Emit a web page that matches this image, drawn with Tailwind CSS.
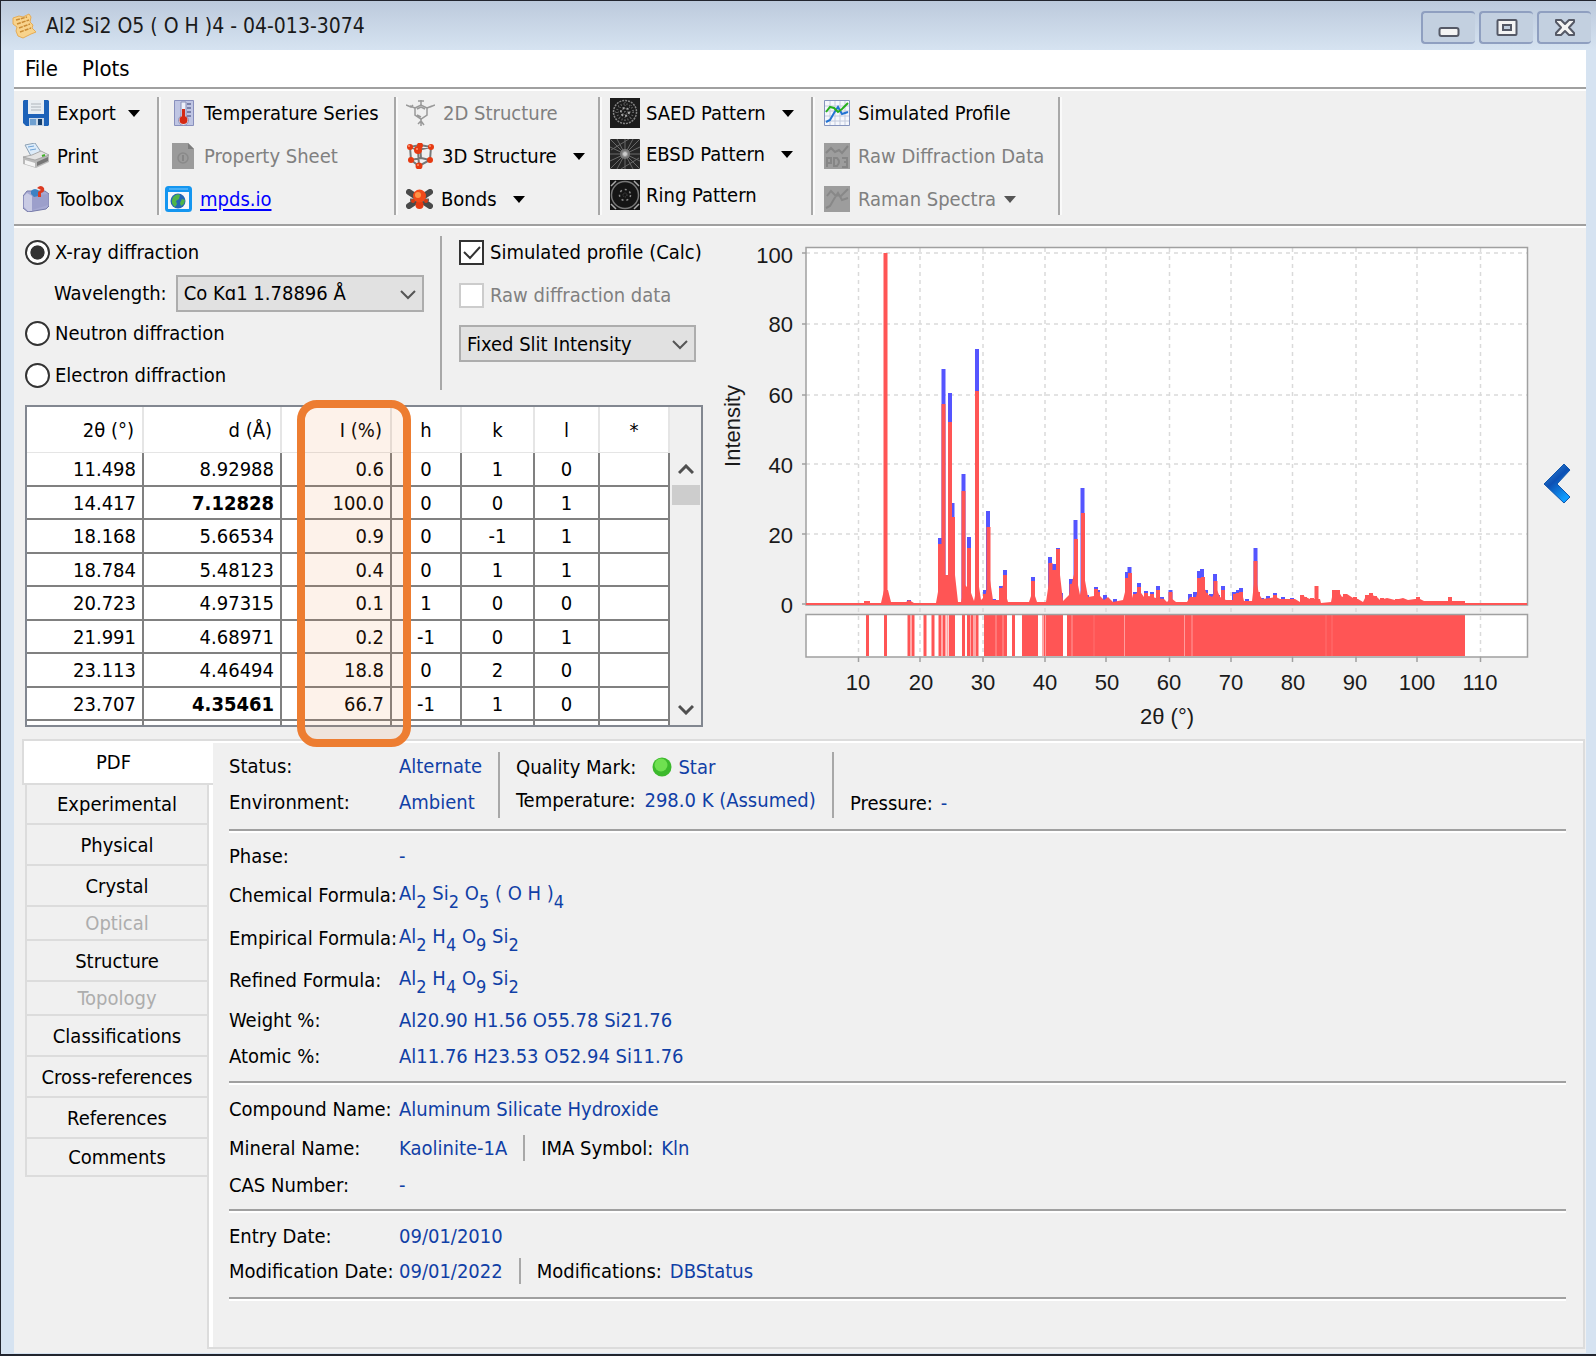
<!DOCTYPE html>
<html lang="en">

<head>
    <meta charset="UTF-8" />
    <meta name="viewport" content="width=device-width, initial-scale=1.0" />
    <title>Al2 Si2 O5 ( O H )4 - 04-013-3074</title>
    <script src="https://cdn.jsdelivr.net/npm/@tailwindcss/browser@4"></script>
</head>

<body
    class="min-h-screen flex flex-col bg-[#d6e3f1] border border-b-2 border-r-0 border-[#22252e] text-black text-[20px] leading-6 font-['DejaVu_Sans_Condensed','DejaVu_Sans',sans-serif]">

    <!-- Title bar -->
    <header class="h-[49px] shrink-0 flex items-center bg-linear-to-b from-[#bccadc] to-[#d6e3f1] pl-[10px] pr-[5px]">
        <svg class="w-[26px] h-[26px]" viewBox="0 0 26 26">
            <path d="M2 5 8 3 12 4 18 1 20 4 19 9 22 12 21 15 25 19 20 21 12 25 7 23 5 18 6 14 2 11Z" fill="#f8d38c" stroke="#e6ac55" />
            <path d="M5 7l11-3M6 11l12-4M8 15l11-4M9 19l11-4" stroke="#c98b35" stroke-width="1.5" stroke-dasharray="4 1" />
        </svg>
        <h1 class="flex-1 pl-[9px] text-[21px] text-[#1a1a1a]">Al2 Si2 O5 ( O H )4 - 04-013-3074</h1>
        <div class="flex gap-1 pt-1">
            <button aria-label="Minimize" class="w-[54px] h-[33px] grid place-items-center rounded-sm border-2 border-r-0 border-[#8f9fc0] bg-[#c3d0e0]">
                <svg class="w-6 h-6" viewBox="0 0 24 24"><rect x="2.500" y="12" width="19" height="8" rx="2" fill="#f4f4f4" stroke="#555966" stroke-width="2" /></svg>
            </button>
            <button aria-label="Maximize" class="w-[54px] h-[33px] grid place-items-center rounded-sm border-2 border-r-0 border-[#8f9fc0] bg-[#c3d0e0]">
                <svg class="w-6 h-6" viewBox="0 0 24 24"><rect x="2.500" y="4" width="19" height="15" rx="1" fill="#f4f4f4" stroke="#555966" stroke-width="2" /><rect x="8" y="9" width="8" height="5" fill="#c3d0e0" stroke="#555966" stroke-width="2" /></svg>
            </button>
            <button aria-label="Close" class="w-[54px] h-[33px] grid place-items-center rounded-sm border-2 border-r-0 border-[#8f9fc0] bg-[#c3d0e0]">
                <svg class="w-6 h-6" viewBox="0 0 24 24"><path d="M3 4h5l4 4 4-4h5v2l-5 5.500 5 5.500v2h-5l-4-4-4 4H3v-2l5-5.500L3 6Z" fill="#f4f4f4" stroke="#555966" stroke-width="2" stroke-linejoin="round" /></svg>
            </button>
        </div>
    </header>

    <div class="flex-1 flex flex-col ml-[13px] mr-[10px] mb-px bg-[#f0f0f0]">
        <!-- Menu -->
        <nav class="h-[39px] flex items-center gap-6 pl-[11px] text-[22px] bg-white border-b-2 border-[#a0a0a0]">
            <button>File</button>
            <button>Plots</button>
        </nav>

        <!-- Toolbar -->
        <div class="h-[137px] flex pt-[3px] border-t-2 border-t-white border-b-2 border-b-[#a0a0a0] shadow-[0_2px_0_#fff]">
            <div class="w-[145px] h-[118px] mt-[3px] pl-[9px] flex flex-col justify-between border-r-2 border-[#a8a8a8] shadow-[2px_0_0_#fafafa]">
                <button class="h-8 flex items-center gap-2">
                    <svg class="w-[26px] h-[26px]" viewBox="0 0 26 26">
                        <path d="M1 0h24l1 1v24l-1 1H3l-3-3V1Z" fill="#1d62b8" />
                        <path d="M5 0h16v14H5Z" fill="#e9eef2" />
                        <path d="M8 4h10M8 7h10M8 10h10" stroke="#aeb5bb" />
                        <path d="M6 18h15v8H6Z" fill="#c7d6e6" />
                        <path d="M15 19h4v6h-4Z" fill="#17406e" />
                        <path d="M7 19h6v6H7Z" fill="#6fa0d0" />
                    </svg>
                    Export
                    <svg class="w-3 h-[7px] ml-1" viewBox="0 0 12 7"><path d="M0 0h12L6 7Z" /></svg>
                </button>
                <button class="h-8 flex items-center gap-2">
                    <svg class="w-[26px] h-[26px]" viewBox="0 0 26 26">
                        <path d="M2 2 12 0 18 9 8 13Z" fill="#dcebf9" stroke="#8ea2b5" />
                        <path d="M5 4l6-1M7 7l6-1" stroke="#6fa3d6" />
                        <path d="M0 14 9 12 18 8 26 12V19L13 25 0 21Z" fill="#b9b9b9" />
                        <path d="M0 14 9 12 18 8 26 12 12 17Z" fill="#e3e3e3" stroke="#969696" stroke-width=".7" />
                        <path d="M2 17l10 3v4L2 21Z" fill="#f5f5f5" />
                        <path d="M14 19l11-5v4l-11 5Z" fill="#777" />
                        <path d="M19 13l3-1" stroke="#43b02a" stroke-width="2" />
                    </svg>
                    Print
                </button>
                <button class="h-8 flex items-center gap-2">
                    <svg class="w-[26px] h-[26px]" viewBox="0 0 26 26">
                        <path d="M0 10 4 5H22L26 8V20L23 23 5 26 0 22Z" fill="#a6a9d2" stroke="#7579a8" />
                        <path d="M1 10 4 7 9 10V25L5 25 1 21Z" fill="#c9cbe4" />
                        <path d="M9 10 25 8V19L9 24Z" fill="#9c9fcb" />
                        <path d="M8 5q4-4 8 0v5l-5 1-3-3Z" fill="#3c82c4" />
                        <path d="M14 2q4-4 7 0 1 4-3 5v4h-3V6l3-2Z" fill="#dc3a20" />
                    </svg>
                    Toolbox
                </button>
            </div>

            <div class="w-[237px] h-[118px] mt-[3px] pl-[6px] flex flex-col justify-between border-r-2 border-[#a8a8a8] shadow-[2px_0_0_#fafafa]">
                <button class="h-8 flex items-center gap-[10px] pl-[9px]">
                    <svg class="w-[20px] h-[26px]" viewBox="0 0 20 26">
                        <path d="M.5.500h19v25H.500Z" fill="#bfc5e3" stroke="#8990bd" />
                        <path d="M13 4h4M13 8h4M13 12h4M13 16h4" stroke="#646b98" stroke-width="1.500" />
                        <path d="M7 2h5v14a5 5 0 1 1-5 0Z" fill="#edf0fa" stroke="#8b91b8" />
                        <path d="M9.500 9v11" stroke="#d42a14" stroke-width="3" /><circle cx="9.500" cy="20" r="4" fill="#d42a14" />
                    </svg>
                    Temperature Series
                </button>
                <button disabled class="h-8 flex items-center gap-[10px] pl-[7px] text-[#808080]">
                    <svg class="w-[22px] h-[26px]" viewBox="0 0 22 26">
                        <path d="M0 0h16l6 6v20H0Z" fill="#9b9b9b" /><path d="M16 0v6h6Z" fill="#7d7d7d" />
                        <circle cx="11" cy="15" r="5" fill="none" stroke="#8a8a8a" stroke-width="1.500" /><path d="M11 12v6" stroke="#868686" stroke-width="2" />
                    </svg>
                    Property Sheet
                </button>
                <a href="#" class="h-8 flex items-center gap-2 text-[#0000ff] underline underline-offset-3">
                    <svg class="w-[27px] h-[26px]" viewBox="0 0 27 26">
                        <rect x="1.500" y="1.500" width="24" height="23" rx="2" fill="#f6f8fa" stroke="#1496f0" stroke-width="3" />
                        <path d="M2 3h23v3H2Z" fill="#1496f0" /><path d="M4 3h19" stroke="#7cc8ff" />
                        <circle cx="13" cy="15" r="7.500" fill="#2366b5" />
                        <path d="M8 11q4-4 7-2l-1 4-3 2 1 3-2 3q-5-4-2-10M17 13l3 1-1 4-3 2-1-3Z" fill="#4fb548" />
                    </svg>
                    mpds.io
                </a>
            </div>

            <div class="w-[204px] h-[118px] mt-[3px] pl-[10px] flex flex-col justify-between border-r-2 border-[#a8a8a8] shadow-[2px_0_0_#fafafa]">
                <button disabled class="h-8 flex items-center gap-2 text-[#808080]">
                    <svg class="w-[29px] h-[28px]" viewBox="0 0 29 28" fill="none" stroke="#999" stroke-width="1.500">
                        <path d="M9 9l6-3 6 3v7l-6 4-6-4ZM11 10l4-2 4 2M11 16l4 2" />
                        <path d="M9 9 4 7M21 9l5-2M15 6V1M15 20v7M0 6l5 2 2-2M24 8l5-2M12 2h6M12 25l3-3 3 4" />
                    </svg>
                    2D Structure
                </button>
                <button class="h-8 flex items-center gap-2">
                    <svg class="w-[28px] h-[26px]" viewBox="0 0 28 26">
                        <path d="M4 4 14 2 25 4M4 4 5 17 13 23 24 17 25 4 12 7 4 4M12 7 13 23M14 2 15 15 5 17M15 15l9 2" fill="none" stroke="#777" stroke-width="2" />
                        <g fill="#e63a12"><circle cx="4" cy="4" r="3" /><circle cx="14" cy="2.500" r="3" /><circle cx="25" cy="4" r="3" /><circle cx="12" cy="7" r="4" /><circle cx="5" cy="17" r="3" /><circle cx="24" cy="17" r="3" /><circle cx="13" cy="23" r="3.500" /></g>
                        <g fill="#ff9670"><circle cx="11" cy="6" r="1" /><circle cx="3" cy="3" r="1" /><circle cx="24" cy="3" r="1" /><circle cx="12" cy="22" r="1" /></g>
                    </svg>
                    3D Structure
                    <svg class="w-3 h-[7px] ml-2" viewBox="0 0 12 7"><path d="M0 0h12L6 7Z" /></svg>
                </button>
                <button class="h-8 flex items-center gap-2">
                    <svg class="w-[27px] h-[20px]" viewBox="0 0 27 20">
                        <path d="M3 3 24 17M24 3 3 17" stroke="#4a4a4a" stroke-width="6" stroke-linecap="round" />
                        <path d="M4 11h19" stroke="#666" stroke-width="3" />
                        <circle cx="13.500" cy="16" r="4" fill="#e63a12" /><circle cx="7" cy="12" r="2" fill="#d93a12" /><circle cx="20" cy="12" r="2" fill="#d93a12" />
                        <circle cx="13.500" cy="7" r="6.500" fill="#f04a1a" /><circle cx="12" cy="6" r="3" fill="#ff9448" />
                    </svg>
                    Bonds
                    <svg class="w-3 h-[7px] ml-2" viewBox="0 0 12 7"><path d="M0 0h12L6 7Z" /></svg>
                </button>
            </div>

            <div class="w-[213px] h-[118px] mt-[3px] pl-[10px] flex flex-col border-r-2 border-[#a8a8a8] shadow-[2px_0_0_#fafafa]">
                <button class="h-[41px] pb-[9px] flex items-center gap-[6px]">
                    <svg class="w-[30px] h-[30px]" viewBox="0 0 30 30" fill="none">
                        <path d="M0 0h30v30H0Z" fill="#1c1c1c" />
                        <circle cx="15" cy="14" r="11.500" stroke="#858585" stroke-width="1.500" stroke-dasharray="2 1" /><circle cx="15" cy="14" r="8" stroke="#666" stroke-width="2" stroke-dasharray="1 2" />
                        <circle cx="15" cy="14" r="4" stroke="#aaa" stroke-width="2" stroke-dasharray="2 2" /><path d="M5 14h20M15 4v20M8 7l14 14M22 7 8 21" stroke="#666" stroke-dasharray="1 2" />
                    </svg>
                    SAED Pattern
                    <svg class="w-3 h-[7px] ml-[10px]" viewBox="0 0 12 7"><path d="M0 0h12L6 7Z" /></svg>
                </button>
                <button class="h-[41px] pb-[9px] flex items-center gap-[6px]">
                    <svg class="w-[30px] h-[30px]" viewBox="0 0 30 30">
                        <path d="M0 0h30v30H0Z" fill="#262626" />
                        <path d="M0 0l30 30M30 0 0 30M15 0v30M0 15h30M7 0l16 30M23 0 7 30M0 8l30 14M0 22 30 8M1 11 19 0M11 30l18-11" stroke="#686868" />
                        <circle cx="15" cy="15" r="5" fill="#777" /><circle cx="15" cy="15" r="2.500" fill="#ccc" stroke="#999" />
                    </svg>
                    EBSD Pattern
                    <svg class="w-3 h-[7px] ml-[10px]" viewBox="0 0 12 7"><path d="M0 0h12L6 7Z" /></svg>
                </button>
                <button class="h-8 flex items-center gap-[6px]">
                    <svg class="w-[30px] h-[30px]" viewBox="0 0 30 30" fill="none">
                        <path d="M0 0h30v30H0Z" fill="#151515" />
                        <circle cx="15" cy="15" r="13.500" stroke="#777" stroke-width="1.500" /><circle cx="15" cy="15" r="5.500" stroke="#888" stroke-width="1.500" stroke-dasharray="2 3" /><circle cx="15" cy="15" r="2" stroke="#555" stroke-dasharray="1 1" />
                        <path d="M1 6 6 1M24 1l5 5M1 24l5 5M29 24l-5 5" stroke="#aaa" stroke-width="1.500" />
                    </svg>
                    Ring Pattern
                </button>
            </div>

            <div class="w-[247px] h-[118px] mt-[3px] pl-[11px] flex flex-col justify-between border-r-2 border-[#a8a8a8] shadow-[2px_0_0_#fafafa]">
                <button class="h-8 flex items-center gap-2">
                    <svg class="w-[26px] h-[26px]" viewBox="0 0 26 26" fill="none">
                        <path d="M.5.500h25v25H.500Z" fill="#f5f7fc" stroke="#8594bd" />
                        <path d="M6 1v24M11 1v24M16 1v24M21 1v24M1 6h24M1 11h24M1 16h24M1 21h24" stroke="#c4cbdd" />
                        <path d="M2 22 6 20 10 13 14 7 18 14 24 12" stroke="#2273d2" stroke-width="2" /><path d="M2 12 6 7 10 8 14 12 18 9 24 3" stroke="#25b01c" stroke-width="2" />
                    </svg>
                    Simulated Profile
                </button>
                <button disabled class="h-8 flex items-center gap-2 text-[#808080]">
                    <svg class="w-[26px] h-[26px]" viewBox="0 0 26 26" fill="none">
                        <path d="M0 0h26v26H0Z" fill="#9d9d9d" />
                        <path d="M2 10 7 5 11 9 15 7 18 10 24 3M3 24V15h4v5H3M10 24V15h3q4 4 0 8h-3M18 15h5v4h-3 3v5h-5" stroke="#868686" stroke-width="2" />
                    </svg>
                    Raw Diffraction Data
                </button>
                <button disabled class="h-8 flex items-center gap-2 text-[#808080]">
                    <svg class="w-[26px] h-[26px]" viewBox="0 0 26 26" fill="none">
                        <path d="M0 0h26v26H0Z" fill="#9d9d9d" />
                        <path d="M2 22 6 20 10 13 14 7 18 14 24 12M3 10 7 5 11 9 17 10 24 3" stroke="#888" stroke-width="2" />
                    </svg>
                    Raman Spectra
                    <svg class="w-3 h-[7px]" viewBox="0 0 12 7"><path d="M0 0h12L6 7Z" fill="#555" /></svg>
                </button>
            </div>
        </div>

        <!-- Controls, reflection list and plot -->
        <div class="flex">
            <div class="w-[689px] shrink-0 pl-[11px] pt-[10px]">
                <div class="flex h-[169px]">
                    <div class="w-[417px] h-[154px] border-r-2 border-[#a8a8a8]">
                        <label class="h-8 flex items-center gap-[5px]">
                            <input type="radio" name="source" checked class="appearance-none w-[25px] h-[25px] rounded-full bg-white border-2 border-[#333] checked:bg-radial checked:from-[#333] checked:from-45% checked:to-white checked:to-50%">
                            X-ray diffraction
                        </label>
                        <div class="h-[50px] flex items-center gap-[9px] pl-[29px]">
                            <label for="wavelength">Wavelength:</label>
                            <div class="relative ml-auto mr-[23px]">
                                <select id="wavelength" class="appearance-none block w-[248px] h-[37px] pl-[6px] bg-[#e1e1e1] border-2 border-[#adadad]">
                                    <option>Co Kɑ1 1.78896 Å</option>
                                </select>
                                <svg class="absolute right-2 top-[15px] w-4 h-[10px] pointer-events-none" viewBox="0 0 16 10"><path d="M1 1l7 7 7-7" fill="none" stroke="#555" stroke-width="2" /></svg>
                            </div>
                        </div>
                        <label class="h-[30px] flex items-center gap-[5px]">
                            <input type="radio" name="source" class="appearance-none w-[25px] h-[25px] rounded-full bg-white border-2 border-[#333] checked:bg-radial checked:from-[#333] checked:from-45% checked:to-white checked:to-50%">
                            Neutron diffraction
                        </label>
                        <label class="h-[54px] flex items-center gap-[5px]">
                            <input type="radio" name="source" class="appearance-none w-[25px] h-[25px] rounded-full bg-white border-2 border-[#333] checked:bg-radial checked:from-[#333] checked:from-45% checked:to-white checked:to-50%">
                            Electron diffraction
                        </label>
                    </div>
                    <div class="pl-[17px]">
                        <div class="h-8 flex items-center gap-[6px]">
                            <div class="relative">
                                <input id="simulated" type="checkbox" checked class="appearance-none block w-[25px] h-[25px] bg-white border-2 border-[#333]">
                                <svg class="absolute inset-0 w-[25px] h-[25px] pointer-events-none" viewBox="0 0 25 25"><path d="M5 12l6 6L21 7" fill="none" stroke="#333" stroke-width="2" /></svg>
                            </div>
                            <label for="simulated">Simulated profile (Calc)</label>
                        </div>
                        <label class="h-[54px] mb-[3px] flex items-center gap-[6px] text-[#808080]">
                            <input type="checkbox" disabled class="appearance-none w-[25px] h-[25px] bg-white border-2 border-[#ccc]">
                            Raw diffraction data
                        </label>
                        <div class="relative w-[237px]">
                            <select aria-label="Intensity type" class="appearance-none block w-full h-[37px] pl-[6px] bg-[#e1e1e1] border-2 border-[#adadad]">
                                <option>Fixed Slit Intensity</option>
                            </select>
                            <svg class="absolute right-2 top-[15px] w-4 h-[10px] pointer-events-none" viewBox="0 0 16 10"><path d="M1 1l7 7 7-7" fill="none" stroke="#555" stroke-width="2" /></svg>
                        </div>
                    </div>
                </div>

                <div class="relative w-[678px] h-[322px] flex border-2 border-[#828790]">
                    <div class="h-[318px] overflow-hidden bg-white">
                        <table class="w-[643px] table-fixed border-separate border-spacing-0 text-center">
                            <thead>
                                <tr class="h-[46px] *:font-normal *:border-r-2 *:border-b *:border-[#e5e5e5]">
                                    <th class="w-[117px] text-right pr-2">2θ (°)</th>
                                    <th class="w-[138px] text-right pr-2">d (Å)</th>
                                    <th class="w-[110px] text-right pr-2">I (%)</th>
                                    <th class="w-[70px]">h</th>
                                    <th class="w-[73px]">k</th>
                                    <th class="w-[65px]">l</th>
                                    <th class="w-[70px]">*</th>
                                </tr>
                            </thead>
                            <tbody class="[&_td]:border-r-2 [&_td]:border-b-2 [&_td]:border-[#808080] [&_tr]:odd:h-[34px] [&_tr]:even:h-[33px]">
                                <tr><td class="text-right pr-[6px]">11.498</td><td class="text-right pr-[6px]">8.92988</td><td class="text-right pr-[6px]">0.6</td><td>0</td><td>1</td><td>0</td><td></td></tr>
                                <tr><td class="text-right pr-[6px]">14.417</td><td class="text-right pr-[6px] font-bold">7.12828</td><td class="text-right pr-[6px]">100.0</td><td>0</td><td>0</td><td>1</td><td></td></tr>
                                <tr><td class="text-right pr-[6px]">18.168</td><td class="text-right pr-[6px]">5.66534</td><td class="text-right pr-[6px]">0.9</td><td>0</td><td>-1</td><td>1</td><td></td></tr>
                                <tr><td class="text-right pr-[6px]">18.784</td><td class="text-right pr-[6px]">5.48123</td><td class="text-right pr-[6px]">0.4</td><td>0</td><td>1</td><td>1</td><td></td></tr>
                                <tr><td class="text-right pr-[6px]">20.723</td><td class="text-right pr-[6px]">4.97315</td><td class="text-right pr-[6px]">0.1</td><td>1</td><td>0</td><td>0</td><td></td></tr>
                                <tr><td class="text-right pr-[6px]">21.991</td><td class="text-right pr-[6px]">4.68971</td><td class="text-right pr-[6px]">0.2</td><td>-1</td><td>0</td><td>1</td><td></td></tr>
                                <tr><td class="text-right pr-[6px]">23.113</td><td class="text-right pr-[6px]">4.46494</td><td class="text-right pr-[6px]">18.8</td><td>0</td><td>2</td><td>0</td><td></td></tr>
                                <tr><td class="text-right pr-[6px]">23.707</td><td class="text-right pr-[6px] font-bold">4.35461</td><td class="text-right pr-[6px]">66.7</td><td>-1</td><td>1</td><td>0</td><td></td></tr>
                                <tr><td></td><td></td><td></td><td></td><td></td><td></td><td></td></tr>
                            </tbody>
                        </table>
                    </div>
                    <div class="flex-1 pt-[46px] flex flex-col items-center bg-[#f0f0f0]">
                        <button aria-label="Scroll up" class="h-8 grid place-items-center"><svg class="w-4 h-[11px]" viewBox="0 0 16 11"><path d="M1 9l7-7 7 7" fill="none" stroke="#505050" stroke-width="3" /></svg></button>
                        <div class="w-7 h-[20px] bg-[#cdcdcd]"></div>
                        <button aria-label="Scroll down" class="mt-auto h-8 grid place-items-center"><svg class="w-4 h-[11px]" viewBox="0 0 16 11"><path d="M1 2l7 7 7-7" fill="none" stroke="#505050" stroke-width="3" /></svg></button>
                    </div>
                    <!-- Intensity column highlight -->
                    <div class="absolute left-[270px] -top-[7px] w-[114px] h-[347px] rounded-[20px] border-8 border-[#ed7d31] bg-[#ed7d31]/10 pointer-events-none"></div>
                </div>
            </div>

            <svg class="flex-1 min-w-0 h-auto font-['Liberation_Sans',Arial,sans-serif]" viewBox="703 226 827 505" font-size="22">
                <path d="M806 247.500h721.500V605H806ZM806 614.500h721.500V657H806Z" fill="#fff" />
                <path d="M806 253h721M806 324h721M806 395h721M806 464h721M806 534h721" stroke="#dadada" stroke-width="1.500" stroke-dasharray="4 4" />
                <path d="M858.500 248v409M920 248v409M983 248v409M1045 248v409M1106 248v409M1169.500 248v409M1231 248v409M1292.500 248v409M1356 248v409M1417 248v409M1480.500 248v409" stroke="#dadada" stroke-width="1.500" stroke-dasharray="4 4" />

                <!-- variable-slit peaks (blue) behind the fixed-slit ones (red) -->
                <path stroke="#5555ff" stroke-width="4" d="M940 604V538M943.500 604V369M950 604V393M952.500 604V503M963.500 604V474M969 604V537M977 604V349M985 604V590M988 604V511M994 604V599M1001 604V586M1005 604V570M1033 604V577M1050 604V557M1054 604V564M1058 604V548M1061 604V593M1071 604V579M1075.500 604V520M1082.500 604V488M1087 604V595M1096 604V587M1098 604V590M1105 604V595M1115 604V599M1127 604V572M1129.500 604V567M1135 604V592M1139 604V583M1146 604V591M1152 604V592M1158 604V586M1162 604V597M1170.500 604V590M1190 604V594M1195 604V592M1199 604V571M1202 604V569M1206 604V590M1211 604V594M1215 604V574M1218 604V595M1223 604V586M1234 604V592M1238 604V590M1241 604V588M1247 604V599M1255.500 604V548M1262 604V598M1268 604V596M1275 604V593M1283 604V597M1292 604V598M909 604V600" />
                <path stroke="#ff5555" stroke-width="4" d="M885.500 604V253M940 604V544M943.500 604V404M950 604V422M953 604V517M963.500 604V491M969 604V548M977 604V391M985 604V594M988.500 604V527M1001 604V588M1005 604V575M1033 604V581M1050.500 604V563M1054 604V570M1058 604V549M1071.500 604V584M1076 604V539M1083 604V513M1087 604V597M1096 604V589M1098 604V592M1127 604V578M1130 604V573M1135 604V594M1139 604V587M1146 604V593M1152 604V594M1158 604V590M1170.500 604V592M1199 604V578M1203 604V577M1206 604V593M1215.500 604V581M1223 604V590M1235 604V594M1241 604V592M1255.500 604V561M1258 604V592M1275 604V595M1302 604V595M1305 604V597M1312 604V598M1316.500 604V586M1334 604V590M1338 604V590M1345 604V594M1348 604V597M1355 604V597M1367 604V595M1371 604V593M1375 604V596M1382 604V598M1397 604V599M1418 604V597M1450 604V597" />
                <path fill="#ff5555" d="M806 603H864V601H870V603H881L884 590 888 590 891 602H906L909 600 914 603H936L941 575 955 575 958 602H961L965 585 970 590 974 601 978 580 981 600 985 596 990 580 993 600 999 600 1003 585 1008 602H1029L1033 590 1037 602H1046L1050 575H1060L1063 601 1069 595 1075 570 1080 595 1084 575 1088 597 1094 596 1100 596 1104 600 1108 597 1113 602 1123 600 1128 580 1133 598 1139 590 1144 597 1149 596 1156 598 1164 599 1167 602 1171 598 1176 602H1187L1190 597 1196 597 1201 580 1207 594 1212 597 1217 590 1220 597 1226 600H1233L1236 593 1242 593 1244 601 1252 601 1255 575 1259 594 1262 599 1270 598 1276 597 1280 599 1295 599 1300 602 1303 596 1310 599 1320 599 1321 603 1331 602 1333 592H1339L1342 597 1347 594 1353 598 1358 599 1363 602 1366 596 1372 595 1377 597 1380 600 1387 598 1395 600 1403 598 1408 600 1415 599 1420 599 1424 601H1448L1454 601H1465V603H1527V605H806Z" />

                <!-- reflection positions -->
                <path stroke="#ff5555" stroke-width="3" d="M867.500 615v41M885.500 615v41M909 615v41M913 615v41M925 615v41M933 615v41M940 615v41M944 615v41M950.500 615v41M953.500 615v41M963.500 615v41M968.500 615v41M972 615v41M977 615v41M1013.500 615v41" />
                <path stroke="#ffa5a5" stroke-width="2" d="M947.500 615v41M974.500 615v41M1043 615v41" />
                <path fill="#ff5555" d="M984 615h23v41h-23ZM1022 615h16v41h-16ZM1044 615h19v41h-19ZM1067 615h398v41h-398Z" />
                <path stroke="#ff9c9c" d="M996 615v41M1003 615v41M1072 615v41M1045.500 615v41M1124.500 615v41M1184.500 615v41M1192 615v41" />
                <path stroke="#ff7070" d="M1094 615v41M1326 615v41M1332 615v41" />

                <path d="M806 247.500h721.500V605H806ZM806 614.500h721.500V657H806Z" fill="none" stroke="#a0a0a0" stroke-width="1.500" />
                <path d="M806 604h721" stroke="#ff5555" stroke-width="2" />
                <path d="M802 253h4M802 324h4M802 395h4M802 464h4M802 534h4M802 604h4M858.500 657v5M920 657v5M983 657v5M1045 657v5M1106 657v5M1169.500 657v5M1231 657v5M1292.500 657v5M1356 657v5M1417 657v5M1480.500 657v5" stroke="#a0a0a0" stroke-width="1.500" />
                <g fill="#1a1a1a">
                    <g text-anchor="end">
                        <text x="793" y="263">100</text><text x="793" y="332">80</text><text x="793" y="403">60</text><text x="793" y="473">40</text><text x="793" y="543">20</text><text x="793" y="613">0</text>
                    </g>
                    <g text-anchor="middle">
                        <text x="858" y="690">10</text><text x="921" y="690">20</text><text x="983" y="690">30</text><text x="1045" y="690">40</text><text x="1107" y="690">50</text><text x="1169" y="690">60</text><text x="1231" y="690">70</text><text x="1293" y="690">80</text><text x="1355" y="690">90</text><text x="1417" y="690">100</text><text x="1480" y="690">110</text>
                        <text x="1167" y="724">2θ (°)</text>
                        <text transform="translate(740 426) rotate(-90)">Intensity</text>
                    </g>
                </g>
            </svg>

            <button aria-label="Show panel" class="w-[53px] mr-[3px] pt-[10px] shrink-0 grid place-items-center">
                <svg class="w-[28px] h-[42px]" viewBox="0 0 28 42">
                    <defs><linearGradient id="arrow" x1="0" y1="0" x2=".6" y2="1"><stop offset="0" stop-color="#3c93dc" /><stop offset=".5" stop-color="#0c50b4" /><stop offset="1" stop-color="#0f9dff" /></linearGradient></defs>
                    <path d="M1 21 21 1 27 7 14 21 27 34 21 40Z" fill="url(#arrow)" stroke="#1257ad" />
                </svg>
            </button>
        </div>

        <!-- Card details -->
        <div class="flex-1 flex ml-2 mt-2 mr-px mb-1">
            <div role="tablist" class="w-[185px] shrink-0 flex flex-col">
                <button role="tab" aria-selected="true" class="relative w-[191px] h-[46px] bg-white border-2 border-r-0 border-[#dcdcdc] pr-[10px]">PDF</button>
                <div class="flex flex-col ml-[3px] *:border-2 *:border-t-0 *:border-r-0 *:border-[#dcdcdc]">
                    <button role="tab" class="h-10">Experimental</button>
                    <button role="tab" class="h-[41px]">Physical</button>
                    <button role="tab" class="h-[41px]">Crystal</button>
                    <button role="tab" disabled class="h-[34px] text-[#adadad]">Optical</button>
                    <button role="tab" class="h-[41px]">Structure</button>
                    <button role="tab" disabled class="h-[34px] text-[#adadad]">Topology</button>
                    <button role="tab" class="h-[41px]">Classifications</button>
                    <button role="tab" class="h-[41px]">Cross-references</button>
                    <button role="tab" class="h-[41px]">References</button>
                    <button role="tab" class="h-[38px]">Comments</button>
                </div>
            </div>

            <div role="tabpanel" class="flex-1 border-2 border-[#dcdcdc]">
                <div class="h-full border-l-4 border-t-2 border-white pl-4 pr-[17px] [&_dd]:text-[#1040a6] *:border-b-2 *:border-[#a0a0a0] *:shadow-[0_2px_0_#fff]">
                    <div class="flex h-[88px] pt-[5px]">
                        <dl class="w-[269px] grid grid-cols-[170px_1fr] auto-rows-[36px] items-center">
                            <dt>Status:</dt><dd>Alternate</dd>
                            <dt>Environment:</dt><dd>Ambient</dd>
                        </dl>
                        <dl class="h-[66px] mt-1 w-[336px] pl-4 border-x-2 border-[#a8a8a8] grid grid-cols-[max-content_1fr] grid-rows-[29px_37px] items-center gap-x-2">
                            <dt>Quality Mark:</dt>
                            <dd class="flex items-center gap-[6px] pl-2">
                                <svg class="w-5 h-5" viewBox="0 0 20 20"><circle cx="10" cy="10" r="9.500" fill="#3cb92c" /><circle cx="9" cy="8" r="6.500" fill="#6fe050" /></svg>
                                Star
                            </dd>
                            <dt>Temperature:</dt><dd>298.0 K (Assumed)</dd>
                        </dl>
                        <dl class="pl-4 pt-9 h-[74px] flex items-center gap-2">
                            <dt>Pressure:</dt><dd>-</dd>
                        </dl>
                    </div>
                    <dl class="grid grid-cols-[170px_1fr] grid-rows-[34px_44px_42px_42px_38px_34px] items-center pt-2 pb-2 [&_sub]:text-lg [&_sub]:leading-none [&_sub]:-bottom-2">
                        <dt>Phase:</dt><dd>-</dd>
                        <dt>Chemical Formula:</dt><dd class="pb-1">Al<sub>2</sub> Si<sub>2</sub> O<sub>5</sub> ( O H )<sub>4</sub></dd>
                        <dt>Empirical Formula:</dt><dd class="pb-1">Al<sub>2</sub> H<sub>4</sub> O<sub>9</sub> Si<sub>2</sub></dd>
                        <dt>Refined Formula:</dt><dd class="pb-1">Al<sub>2</sub> H<sub>4</sub> O<sub>9</sub> Si<sub>2</sub></dd>
                        <dt>Weight %:</dt><dd>Al20.90 H1.56 O55.78 Si21.76</dd>
                        <dt>Atomic %:</dt><dd>Al11.76 H23.53 O52.94 Si11.76</dd>
                    </dl>
                    <dl class="grid grid-cols-[170px_1fr] grid-rows-[36px_42px_32px] items-center pt-2 pb-2">
                        <dt>Compound Name:</dt><dd>Aluminum Silicate Hydroxide</dd>
                        <dt>Mineral Name:</dt>
                        <dd class="flex items-center">Kaolinite-1A <span class="ml-4 mr-4 w-0.5 h-[26px] bg-[#a8a8a8]"></span><span class="text-black mr-2">IMA Symbol:</span>Kln</dd>
                        <dt>CAS Number:</dt><dd>-</dd>
                    </dl>
                    <dl class="grid grid-cols-[170px_1fr] grid-rows-[34px_36px] items-center pt-2 pb-2">
                        <dt>Entry Date:</dt><dd>09/01/2010</dd>
                        <dt>Modification Date:</dt>
                        <dd class="flex items-center">09/01/2022 <span class="ml-4 mr-4 w-0.5 h-[26px] bg-[#a8a8a8]"></span><span class="text-black mr-2">Modifications:</span>DBStatus</dd>
                    </dl>
                </div>
            </div>
        </div>
    </div>
</body>

</html>
